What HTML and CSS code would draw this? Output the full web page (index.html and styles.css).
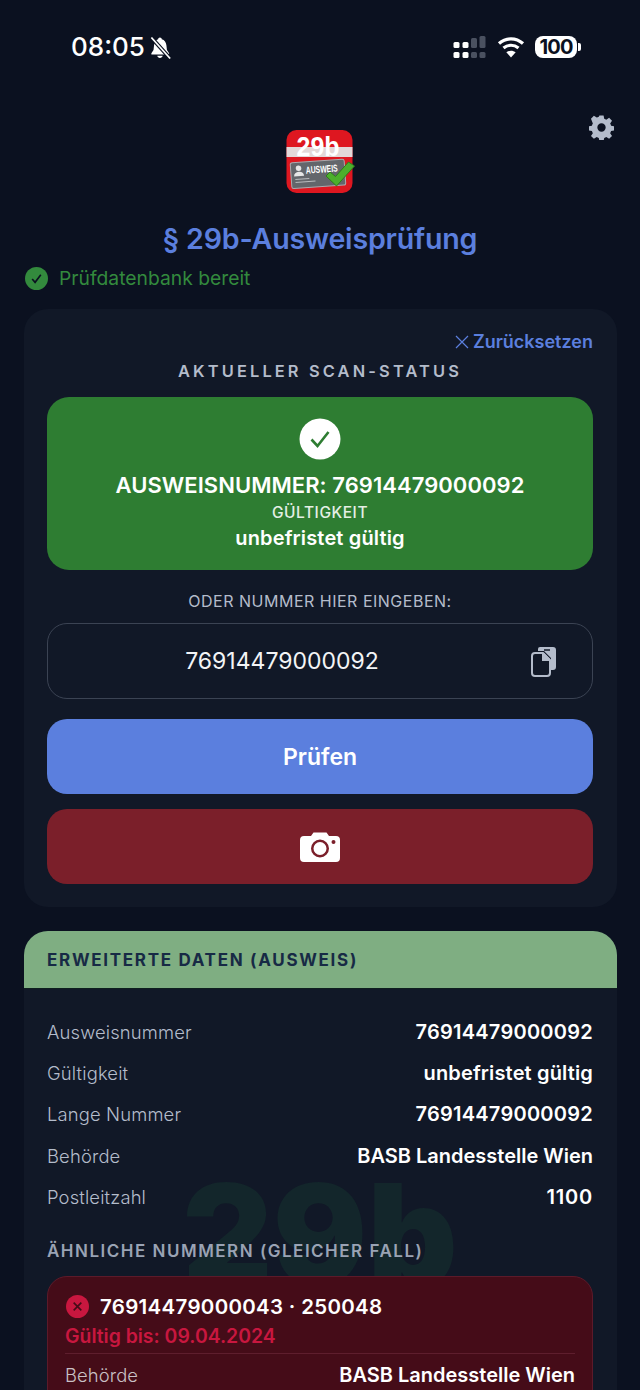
FILE: index.html
```html
<!DOCTYPE html>
<html lang="de">
<head>
<meta charset="utf-8">
<title>§ 29b-Ausweisprüfung</title>
<link rel="stylesheet" href="styles.css">
</head>
<body>
<div class="phone">
  <header class="statusbar">
    <div class="sb-left">
      <span class="time">08:05</span>
      <svg class="bell" width="21" height="22" viewBox="2 1 18 20.500"><path fill="#fff" d="M10.500 1.500c1 0 1.600.7 1.700 1.500 2.600.7 4 2.900 4.300 5.600l.5 4.600 2 3v1H2.500v-1l2-3 .5-4.600C5.300 5.900 6.700 3.700 8.800 3c.1-.8.700-1.500 1.700-1.500zM8 18.500h5c-.2 1.300-1.200 2-2.500 2S8.200 19.800 8 18.500z"/><path stroke="#0b1120" stroke-width="3.600" d="M2.500 1.500 20 21"/><path stroke="#fff" stroke-width="1.600" d="M2.500 1.500 20 21"/></svg>
    </div>
    <div class="sb-right">
      <svg class="signal" width="33" height="22" viewBox="0 0 33 22">
        <rect x="0.500" y="6" width="6" height="6" rx="1.500" fill="#fff"/><rect x="9.500" y="6" width="6" height="6" rx="1.500" fill="#fff"/>
        <rect x="0.500" y="16" width="6" height="6" rx="1.500" fill="#fff"/><rect x="9.500" y="16" width="6" height="6" rx="1.500" fill="#fff"/>
        <rect x="18" y="2" width="6" height="10" rx="1.500" fill="#4a5160"/><rect x="26.500" y="0" width="6" height="12" rx="1.500" fill="#4a5160"/>
        <rect x="18" y="16" width="6" height="6" rx="1.500" fill="#4a5160"/><rect x="26.500" y="16" width="6" height="6" rx="1.500" fill="#4a5160"/>
      </svg>
      <svg class="wifi" width="28" height="22" viewBox="0 0 28 22"><path fill="none" stroke="#fff" stroke-width="3.200" d="M2 7.500C9 1.200 19 1.200 26 7.500M6.500 12C11 8.300 17 8.300 21.500 12"/><path fill="#fff" d="M14 21.500 9.300 16.200c2.800-2.100 6.600-2.100 9.400 0z"/></svg>
      <div class="battery"><span class="batt-body">100</span><span class="batt-cap"></span></div>
    </div>
  </header>

  <section class="brand">
    <svg class="gear" width="25" height="25" viewBox="0 0 24 24"><path fill="#b4bccb" fill-rule="evenodd" d="M10 .500h4l.6 3.100c.7.200 1.400.5 2 .9l2.700-1.800 2.800 2.800-1.800 2.700c.4.600.7 1.300.9 2l3 .6v4l-3 .6c-.2.700-.5 1.400-.9 2l1.800 2.700-2.800 2.800-2.700-1.800c-.6.400-1.300.7-2 .9l-.6 3h-4l-.6-3c-.7-.2-1.400-.5-2-.9l-2.700 1.800-2.800-2.800 1.800-2.700c-.4-.6-.7-1.300-.9-2l-3-.6v-4l3-.6c.2-.7.500-1.400.9-2L1.900 3.500l2.800-2.800 2.700 1.800c.6-.4 1.300-.7 2-.9zM12 8a4 4 0 1 0 0 8 4 4 0 0 0 0-8z"/></svg>
    <svg class="logo" width="70" height="64" viewBox="0 0 70 64">
      <rect x="0.500" y="0" width="66" height="63" rx="10" fill="#de1720"/>
      <rect x="0.500" y="17" width="66" height="10" fill="#e3d8d8"/>
      <text x="10.500" y="26" class="logo-num" textLength="43" lengthAdjust="spacingAndGlyphs">29b</text>
      <g transform="rotate(-4 30 44)">
        <rect x="5" y="31" width="54" height="26" rx="2" fill="#63666b" stroke="#a9abaf" stroke-width="1"/>
        <circle cx="13" cy="37" r="2.800" fill="#e6e6e6"/>
        <path fill="#e6e6e6" d="M8 45c0-3 2-4.500 5-4.500s5 1.500 5 4.500z"/>
        <text x="20" y="43" class="logo-id" textLength="32" lengthAdjust="spacingAndGlyphs">AUSWEIS</text>
        <path stroke="#b9bbbe" stroke-width="1" d="M9 48h14M9 51h20"/>
      </g>
      <path fill="#4caf2c" stroke="#2e7d1b" stroke-width="1" d="M40 46 44 42 49.500 46.500 62.500 32 68.500 36 50.500 56z"/>
    </svg>
    <h1 class="title">§ 29b-Ausweisprüfung</h1>
  </section>

  <div class="db-status">
    <svg width="23" height="23" viewBox="0 0 24 24"><circle cx="12" cy="12" r="12" fill="#338a3d"/><path fill="none" stroke="#0b1120" stroke-width="1.700" d="M7.500 12.500l3 3.500 6-8"/></svg>
    <span>Prüfdatenbank bereit</span>
  </div>

  <main class="card scan-card">
    <div class="reset-row">
      <svg width="14" height="14" viewBox="0 0 14 14"><path stroke="#5b7fde" stroke-width="1.200" d="M1 1l12 12M13 1 1 13"/></svg>
      <span>Zurücksetzen</span>
    </div>
    <h2 class="scan-heading">AKTUELLER SCAN-STATUS</h2>
    <div class="result">
      <svg width="42" height="42" viewBox="0 0 42 42"><circle cx="21" cy="21" r="20.500" fill="#fff"/><path fill="none" stroke="#2e7d32" stroke-width="2.600" d="M12.500 21.500l6 6.500 11-14"/></svg>
      <div class="result-num">AUSWEISNUMMER: 76914479000092</div>
      <div class="result-label">GÜLTIGKEIT</div>
      <div class="result-val">unbefristet gültig</div>
    </div>
    <div class="or-label">ODER NUMMER HIER EINGEBEN:</div>
    <div class="input">
      <span class="input-val">76914479000092</span>
      <svg class="paste" width="26" height="32" viewBox="0 0 26 32"><path fill="#b4bccb" d="M9 1h13a3 3 0 0 1 3 3v17a3 3 0 0 1-3 3h-2V12l-7-7H7V3a2 2 0 0 1 2-2z"/><path stroke="#111827" stroke-width="1.500" d="M13 4h6"/><path fill="none" stroke="#b4bccb" stroke-width="2" d="M4 7h8l7 7v13a3 3 0 0 1-3 3H4a3 3 0 0 1-3-3V10a3 3 0 0 1 3-3z"/><path fill="#b4bccb" d="M11 7h2l6 6v2h-8z"/></svg>
    </div>
    <button class="btn btn-check">Prüfen</button>
    <button class="btn btn-camera" aria-label="Kamera">
      <svg width="40" height="30" viewBox="0 0 40 30"><path fill="#fff" fill-rule="evenodd" d="M4 4h7l2.500-3.500h13L29 4h7a4 4 0 0 1 4 4v18a4 4 0 0 1-4 4H4a4 4 0 0 1-4-4V8a4 4 0 0 1 4-4zm16 3.500a9 9 0 1 0 0 18 9 9 0 0 0 0-18zm0 2.500a6.500 6.500 0 1 1 0 13 6.500 6.500 0 0 1 0-13zm13.500-2a2 2 0 1 0 0 4 2 2 0 0 0 0-4z"/></svg>
    </button>
  </main>

  <section class="card data-card">
    <div class="data-head">ERWEITERTE DATEN (AUSWEIS)</div>
    <div class="data-body">
      <div class="watermark">29b</div>
      <dl class="rows">
        <div class="row"><dt>Ausweisnummer</dt><dd class="num">76914479000092</dd></div>
        <div class="row"><dt>Gültigkeit</dt><dd class="word">unbefristet gültig</dd></div>
        <div class="row"><dt>Lange Nummer</dt><dd class="num">76914479000092</dd></div>
        <div class="row"><dt>Behörde</dt><dd>BASB Landesstelle Wien</dd></div>
        <div class="row"><dt>Postleitzahl</dt><dd class="plz">1100</dd></div>
      </dl>
      <h3 class="similar-heading">ÄHNLICHE NUMMERN (GLEICHER FALL)</h3>
      <article class="similar">
        <div class="similar-top">
          <svg width="23" height="23" viewBox="0 0 24 24"><circle cx="12" cy="12" r="12" fill="#c8173f"/><path stroke="#450c18" stroke-width="1.700" d="M8 8l8 8M16 8l-8 8"/></svg>
          <span>76914479000043 · 250048</span>
        </div>
        <div class="similar-date">Gültig bis: 09.04.2024</div>
        <div class="similar-row"><span class="sr-label">Behörde</span><span class="sr-val">BASB Landesstelle Wien</span></div>
      </article>
    </div>
  </section>
</div>
</body>
</html>
```
FILE: styles.css
```css
* { box-sizing: border-box; }
html, body { margin: 0; padding: 0; }
body {
  background: #0b1120;
  font-family: Inter, "Liberation Sans", sans-serif;
  color: #fff;
}
.phone {
  width: 640px;
  height: 1390px;
  overflow: hidden;
  background: #0b1120;
}
.statusbar {
  height: 111px;
  padding: 33px 59px 0 71px;
  display: flex;
  justify-content: space-between;
  align-items: flex-start;
}
.sb-left { display: flex; align-items: center; gap: 5px; }
.time { font-size: 26px; font-weight: 500; line-height: 28px; }
.bell { display: block; margin-top: 1px; }
.sb-right { display: flex; align-items: center; gap: 10px; margin-top: 3px; }
.signal, .wifi { display: block; }
.wifi { margin-left: 1px; }
.battery { display: flex; align-items: center; gap: 1px; }
.batt-body {
  width: 42px;
  height: 22px;
  border-radius: 8px;
  background: #fff;
  color: #0b1120;
  font-size: 20px;
  font-weight: 700;
  line-height: 22px;
  text-align: center;
  letter-spacing: -0.8px;
}
.batt-cap { width: 3px; height: 8px; background: #fff; border-radius: 0 2px 2px 0; }

.brand {
  position: relative;
  display: flex;
  flex-direction: column;
  align-items: center;
  padding-top: 19px;
}
.gear { position: absolute; right: 26px; top: 4px; }
.logo { display: block; overflow: visible; margin-left: 2px; }
.logo-num {
  font-family: "Liberation Sans", sans-serif;
  font-size: 28px;
  font-weight: 700;
  fill: #fff;
}
.logo-id {
  font-family: "Liberation Sans", sans-serif;
  font-size: 10px;
  font-weight: 700;
  fill: #fff;
}
.title {
  margin: 27px 0 0;
  font-size: 28.600px;
  line-height: 36px;
  font-weight: 600;
  color: #5b7fde;
  letter-spacing: -0.2px;
}
.db-status {
  display: flex;
  align-items: center;
  gap: 11px;
  margin: 6px 0 0 25px;
  height: 30px;
  color: #338a3d;
  font-size: 19.300px;
  font-weight: 400;
}
.card {
  margin: 0 23.500px;
  background: #111827;
  border-radius: 24px;
}
.scan-card {
  margin-top: 16px;
  height: 598px;
  padding: 22px 23.500px 0;
  display: flex;
  flex-direction: column;
}
.reset-row {
  display: flex;
  justify-content: flex-end;
  align-items: center;
  gap: 4px;
  color: #5b7fde;
  font-size: 18px;
  font-weight: 600;
  line-height: 22px;
}
.scan-heading {
  margin: 7px 0 0;
  text-align: center;
  font-size: 16.400px;
  font-weight: 600;
  line-height: 22px;
  letter-spacing: 3.150px;
  color: #b4bccb;
}
.result {
  margin-top: 15px;
  height: 173px;
  border-radius: 22px;
  background: #2e7d32;
  display: flex;
  flex-direction: column;
  align-items: center;
  padding-top: 21px;
}
.result svg { display: block; }
.result-num { margin-top: 11px; font-size: 22px; font-weight: 600; line-height: 28px; letter-spacing: 0.05px; }
.result-label { margin-top: 4px; font-size: 15.500px; font-weight: 500; line-height: 20px; color: #e4efe5; letter-spacing: 0.55px; }
.result-val { margin-top: 3px; font-size: 20px; font-weight: 600; line-height: 24px; letter-spacing: 0.15px; }
.or-label {
  margin-top: 20px;
  text-align: center;
  color: #b4bccb;
  font-size: 16px;
  line-height: 22px;
  letter-spacing: 0.5px;
}
.input {
  margin-top: 11px;
  height: 76px;
  border: 1px solid #3b4353;
  border-radius: 20px;
  position: relative;
  display: flex;
  align-items: center;
  justify-content: center;
  padding-right: 76px;
}
.input-val { font-size: 23px; font-weight: 400; color: #f3f4f6; }
.paste { position: absolute; right: 35px; top: 22px; }
.btn {
  display: flex;
  align-items: center;
  justify-content: center;
  width: 100%;
  height: 75px;
  border: 0;
  border-radius: 20px;
  color: #fff;
  font-family: inherit;
}
.btn-check {
  margin-top: 20px;
  background: #5b7fde;
  font-size: 23px;
  font-weight: 600;
}
.btn-camera { margin-top: 15px; background: #7b1f2a; }
.data-card {
  margin-top: 24px;
  height: 520px;
  border-radius: 24px 24px 0 0;
  overflow: hidden;
}
.data-head {
  height: 57.500px;
  padding: 1px 23.500px 0;
  display: flex;
  align-items: center;
  background: #7fae82;
  color: #172a45;
  font-size: 17px;
  font-weight: 700;
  letter-spacing: 1.700px;
  border-bottom: 1px solid #0f1f1f;
}
.data-body { position: relative; padding: 23px 23.500px 0; }
.watermark {
  position: absolute;
  left: 0;
  right: 0;
  top: 175px;
  text-align: center;
  font-size: 140px;
  font-weight: 900;
  line-height: 140px;
  color: #13262b;
}
.rows { position: relative; margin: 0; }
.row {
  display: flex;
  justify-content: space-between;
  align-items: center;
  height: 41.200px;
}
.row dt { font-size: 18.400px; font-weight: 300; color: #b4bccb; letter-spacing: 0.15px; }
.row dd { margin: 0; font-size: 20px; font-weight: 600; color: #fff; }
.row dd.num { letter-spacing: 0.25px; }
.row dd.word { letter-spacing: 0.15px; }
.row dd.plz { letter-spacing: 0.8px; }
.similar-heading {
  position: relative;
  margin: 23px 0 0;
  font-size: 17px;
  font-weight: 600;
  line-height: 22px;
  letter-spacing: 1.500px;
  color: #9aa3b4;
}
.similar {
  position: relative;
  margin-top: 14px;
  height: 160px;
  padding: 15px 17px 0;
  background: #450c18;
  border: 1px solid #5c1a2a;
  border-radius: 20px;
}
.similar-top { display: flex; align-items: center; gap: 11px; height: 28px; padding-left: 1px; font-size: 20.500px; font-weight: 600; letter-spacing: 0.3px; }
.similar-top svg { display: block; }
.similar-date { margin-top: 3px; color: #c8173f; font-size: 19.400px; font-weight: 600; line-height: 26px; padding-bottom: 4px; border-bottom: 1px solid #5e1e2d; }
.similar-row { display: flex; justify-content: space-between; align-items: center; height: 42px; }
.sr-label { font-size: 18.400px; font-weight: 300; color: #c9c0c5; letter-spacing: 0.1px; }
.sr-val { font-size: 20px; font-weight: 600; }
```
